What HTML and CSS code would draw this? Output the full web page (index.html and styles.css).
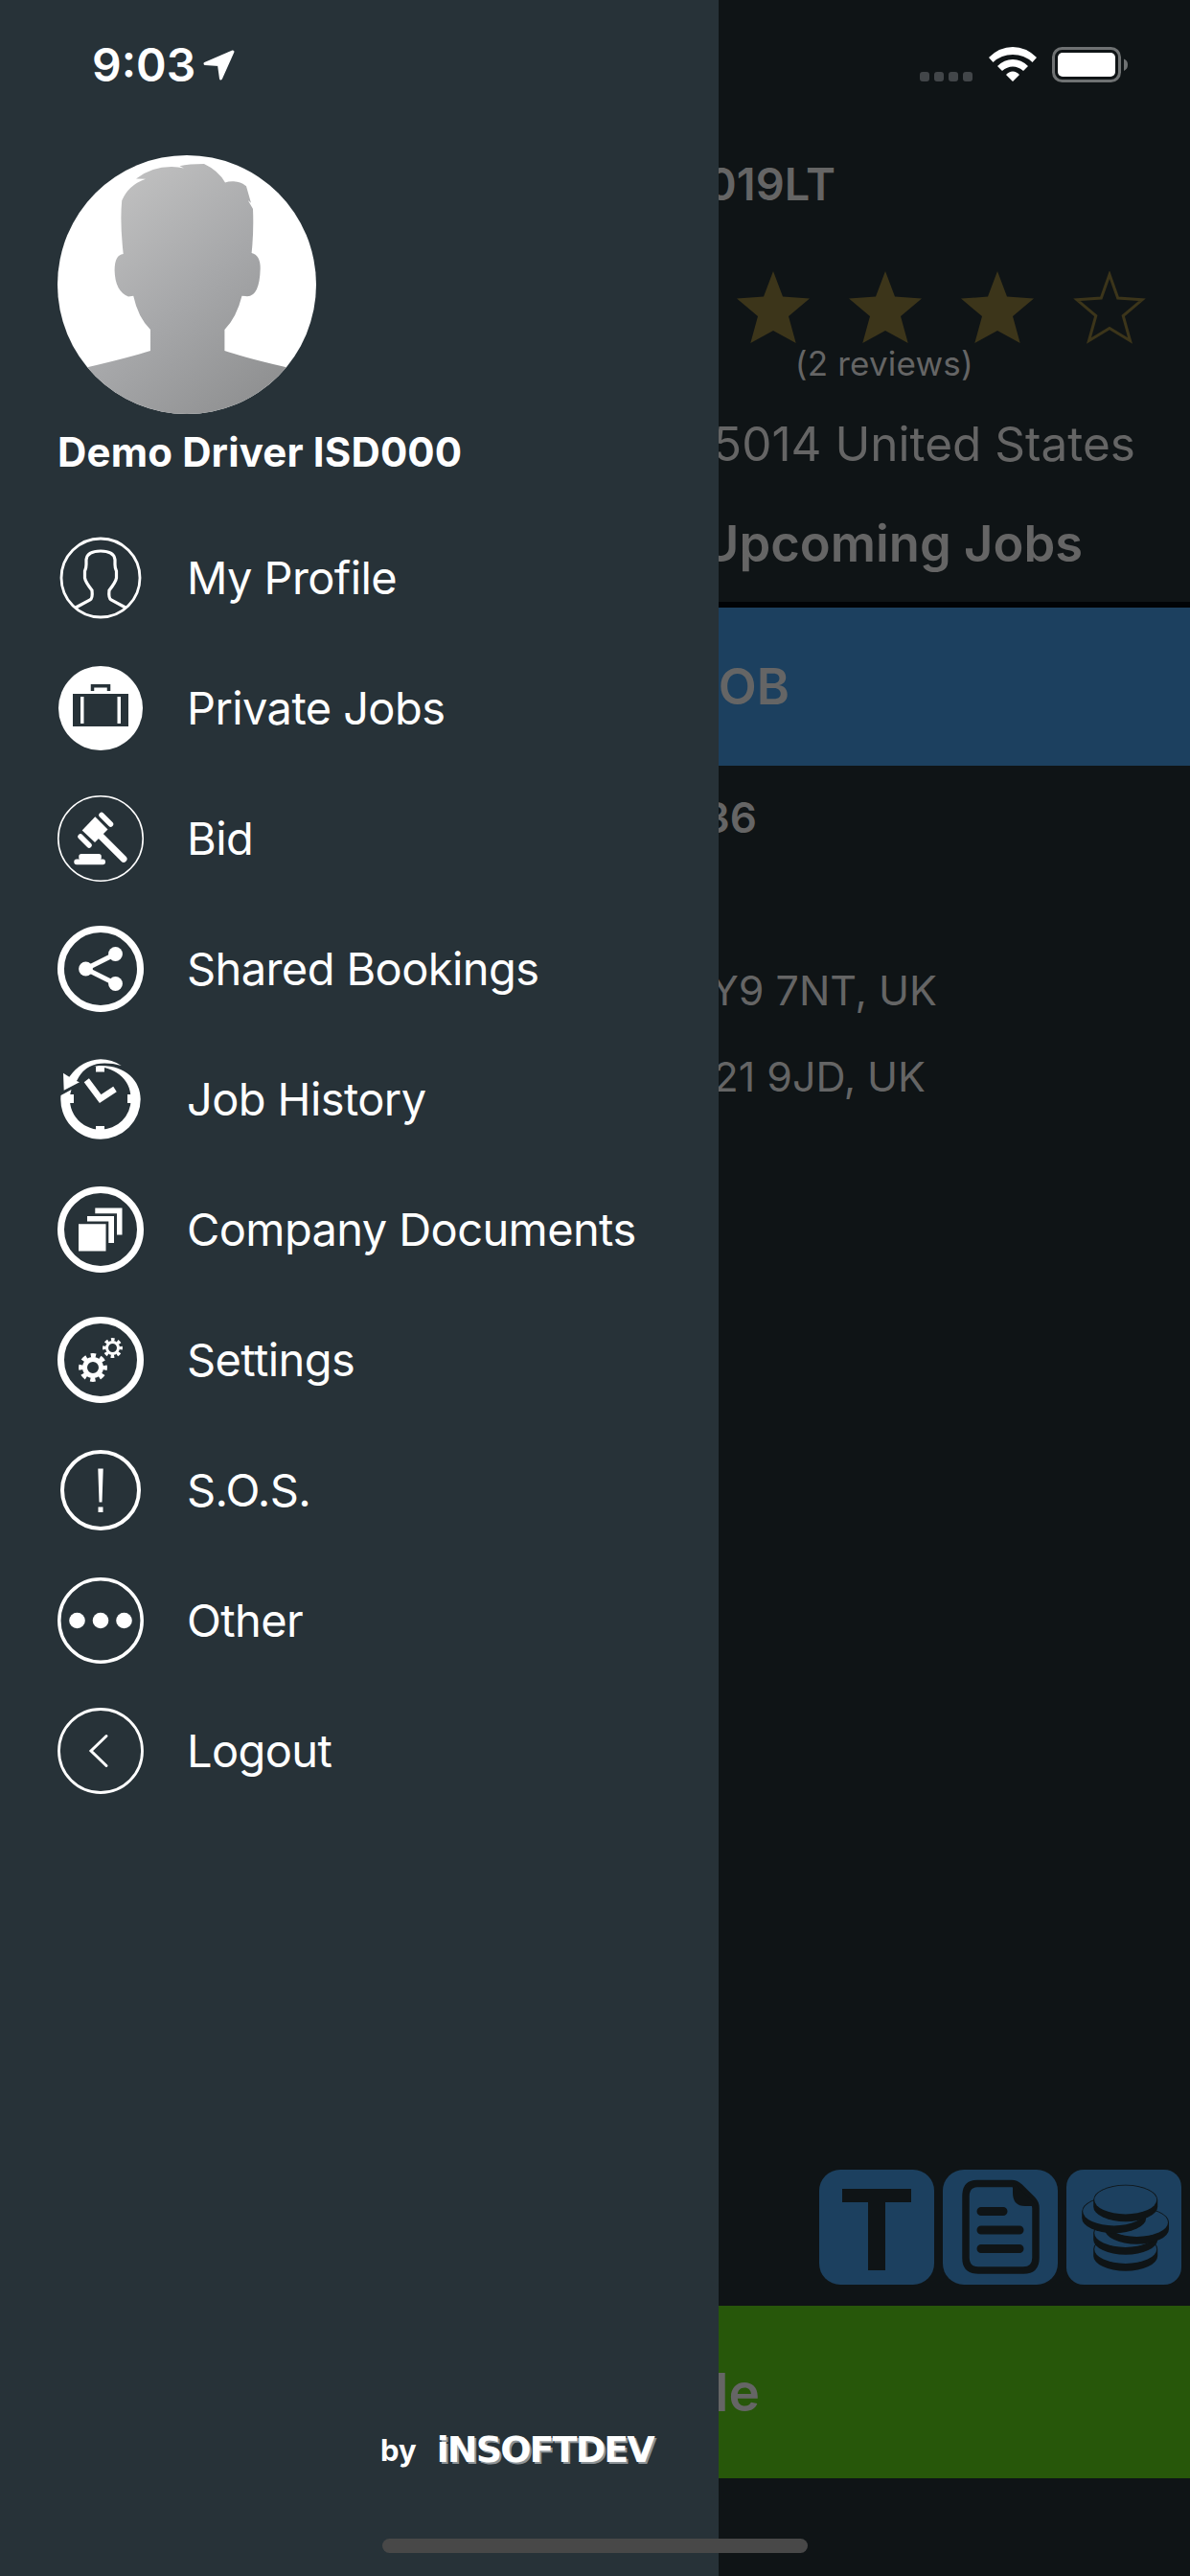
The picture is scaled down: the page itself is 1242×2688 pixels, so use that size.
FILE: index.html
```html
<!DOCTYPE html>
<html lang="en">
<head>
<meta charset="utf-8">
<title>Driver menu</title>
<link rel="stylesheet" href="styles.css">
</head>
<body>
<div class="app">
  <main class="screen">
    <h2 class="row plate">019LT</h2>
    <div class="rating">
      <svg class="star" viewBox="0 0 76 76"><path d="M38 0 48 26.5 76 28.6 54 47 61.7 75 38 62 14.3 75 22 47 0 28.6 28 26.5Z"/></svg>
      <svg class="star" viewBox="0 0 76 76"><path d="M38 0 48 26.5 76 28.6 54 47 61.7 75 38 62 14.3 75 22 47 0 28.6 28 26.5Z"/></svg>
      <svg class="star" viewBox="0 0 76 76"><path d="M38 0 48 26.5 76 28.6 54 47 61.7 75 38 62 14.3 75 22 47 0 28.6 28 26.5Z"/></svg>
      <svg class="star star-empty" viewBox="0 0 76 76"><path d="M38 3.500 46.700 28 72 29.800 52.200 46.500 59.500 72.500 38 59.500 16.500 72.500 23.800 46.500 4 29.800 29.300 28Z"/></svg>
    </div>
    <p class="row reviews">(2 reviews)</p>
    <p class="row address">5014 United States</p>
    <h2 class="row upcoming">Upcoming Jobs</h2>
    <div class="row job-bar">OB</div>
    <p class="row job-id">36</p>
    <p class="row stop stop-from">Y9 7NT, UK</p>
    <p class="row stop stop-to">21 9JD, UK</p>
    <div class="tools">
      <svg class="tool" viewBox="0 0 120 120"><rect class="tile" width="120" height="120" rx="22"/><path class="ink" d="M24 20H96V34H69V105H51V34H24Z"/></svg>
      <svg class="tool" viewBox="0 0 120 120"><rect class="tile" width="120" height="120" rx="22"/><path class="ink-line" d="M36 14.5H72Q76 14.5 80 18L93 31Q97 35 97 40V92Q97 105 84 105H37Q24 105 24 92V28Q24 14.5 36 14.5Z"/><path class="ink" d="M73 14V24Q73 38 86 38H98L76 15Z"/><path class="ink-bar" d="M40 43.500H63M40 63H80M40 82.500H80"/></svg>
      <svg class="tool" viewBox="0 0 120 120">
        <defs><g id="coin"><path class="ink" d="M-33.500 0A33.500 15.700 0 0 1 33.500 0V7A33.500 15.700 0 0 1 -33.500 7Z"/><ellipse class="tile" rx="32.500" ry="14.900"/></g></defs>
        <rect class="tile" width="120" height="120" rx="18"/>
        <use href="#coin" x="61.700" y="83"/>
        <use href="#coin" x="61.700" y="66"/>
        <use href="#coin" x="73.500" y="55"/>
        <use href="#coin" x="49.700" y="43.500"/>
        <use href="#coin" x="61.700" y="31.500"/>
      </svg>
    </div>
    <div class="row status-bar-green">le</div>
  </main>

  <aside class="drawer">
    <svg class="avatar" viewBox="0 0 270 270">
      <defs>
        <linearGradient id="skin" x1="0.1" y1="0" x2="0.8" y2="1"><stop offset="0" stop-color="#c4c4c4"/><stop offset="0.55" stop-color="#a6a7a9"/><stop offset="1" stop-color="#8f9091"/></linearGradient>
        <clipPath id="disc"><circle cx="135" cy="135" r="135"/></clipPath>
      </defs>
      <circle cx="135" cy="135" r="135" fill="#fff"/>
      <path clip-path="url(#disc)" fill="url(#skin)" d="M82 24.500Q98 12 119 12Q126 12 132 13.500L127.500 11.300Q137 9 153 9Q168 16 175 28.500Q179 27 184 27.300Q192 28 197 32.300L202 49.700 198.800 47 204 56Q205 80 202.600 102Q211.700 104 211.700 118Q211 147 198 147.300L192.500 146.700Q187 169 174.400 182V204Q195 211 239 221.300V270H31V221.300Q75 211 97 204V182Q84 169 79.200 146.700L74 147.500Q60 142 59.600 120Q59.600 104 68.700 103Q65 70 67.200 47.300Q74 31 92 24.700Z"/>
    </svg>
    <h1 class="driver-name">Demo Driver ISD000</h1>
    <nav class="menu">
      <a class="item"><svg class="icon" viewBox="0 0 90 90"><g class="line"><circle cx="45" cy="45" r="41" stroke-width="2.800"/><path stroke-width="3.200" d="M19 76 34 68Q37 66 36 58Q29 49 28.500 45V38Q30 35 30 31V26Q31 17 45 17Q59 17 60 26V31Q60 35 61.500 38V45Q61 49 54 58Q53 66 56 68L71 76"/></g></svg><span class="label">My Profile</span></a>
      <a class="item"><svg class="icon" viewBox="0 0 90 90"><circle cx="45" cy="45" r="44" fill="#fff"/><path class="cut" d="M16 30H74V64H16Z"/><path fill="#fff" d="M24 33H27.500V61H24ZM62.500 33H66V61H62.500Z"/><path class="cut-line" d="M36.500 27V21.700H53.500V27"/></svg><span class="label">Private Jobs</span></a>
      <a class="item"><svg class="icon" viewBox="0 0 90 90"><circle class="line" cx="45" cy="45" r="44.200" stroke-width="1.600"/><path fill="#fff" d="M39.300 22.300 52.500 35.500 39 49 25.700 36.500Z"/><path class="line" stroke-width="5.500" stroke-linecap="round" d="M46 20.500 55.500 30M24 43 33 52"/><path class="line" stroke-width="7" stroke-linecap="round" d="M45 42.300 69 66.300"/><rect x="22.300" y="61" width="23.500" height="6.500" rx="2.700" fill="#fff"/><rect x="17.300" y="66.500" width="32.700" height="5.700" rx="2.700" fill="#fff"/></svg><span class="label">Bid</span></a>
      <a class="item"><svg class="icon" viewBox="0 0 90 90"><circle class="line" cx="45" cy="45" r="41.500" stroke-width="7"/><path class="line" stroke-width="5" d="M60.500 29.500 29.500 45 60.500 60.500"/><g fill="#fff"><circle cx="60.500" cy="29.500" r="7.400"/><circle cx="29.500" cy="45" r="7.400"/><circle cx="60.500" cy="60.500" r="7.400"/></g></svg><span class="label">Shared Bookings</span></a>
      <a class="item"><svg class="icon" viewBox="0 0 90 90"><g fill="#fff"><path d="M14.500 35 3.500 41A41.700 41.700 0 0 0 45 86.700A41.700 41.700 0 0 0 86.700 45C86.700 24 68 7 38 10.500C58 11.500 76.700 22 76.700 45A31.700 31.700 0 0 1 45 76.700A31.700 31.700 0 0 1 14.500 35Z"/><path d="M66.700 10Q57 3.500 45 3.300Q25 4 12.300 21.700L6 17.700 6.700 35.700 23 27.300 20 26Q28 9 45 7.700Q56 7 66.700 10Z"/><path d="M40 11H49V16.500H40ZM40 73H49V78H40ZM12 40H17V49H12ZM73 40H78V49H73Z"/></g><path class="line" stroke-width="6.500" d="M30.300 25.300 44.700 44.500 60 34.500"/></svg><span class="label">Job History</span></a>
      <a class="item"><svg class="icon" viewBox="0 0 90 90"><circle class="line" cx="45" cy="45" r="41.500" stroke-width="7"/><path fill="#fff" d="M22 39.300H50.500V67.500H22ZM31 31H59V59H53.300V36.500H31ZM39.300 22.500H67.500V50.500H62V28.300H39.300Z"/></svg><span class="label">Company Documents</span></a>
      <a class="item"><svg class="icon" viewBox="0 0 90 90"><circle class="line" cx="45" cy="45" r="41.500" stroke-width="7"/><circle class="line" cx="37" cy="53" r="8.500" stroke-width="5"/><circle class="line" cx="37" cy="53" r="12.600" stroke-width="4.600" stroke-dasharray="5.300 4.596" stroke-dashoffset="2.650"/><circle class="line" cx="57.500" cy="32.500" r="6" stroke-width="3"/><circle class="line" cx="57.500" cy="32.500" r="8.700" stroke-width="3.400" stroke-dasharray="3.600 3.233" stroke-dashoffset="1.800"/></svg><span class="label">Settings</span></a>
      <a class="item"><svg class="icon" viewBox="0 0 90 90"><circle class="line" cx="45" cy="45" r="40" stroke-width="4"/><path fill="#fff" d="M42.300 22.500H47.700L46.500 57.500H43.500ZM42.500 62.500H47.500V68H42.500Z"/></svg><span class="label">S.O.S.</span></a>
      <a class="item"><svg class="icon" viewBox="0 0 90 90"><circle class="line" cx="45" cy="45" r="43.200" stroke-width="3.500"/><g fill="#fff"><circle cx="20.500" cy="45" r="8.300"/><circle cx="45" cy="45" r="8.300"/><circle cx="69.500" cy="45" r="8.300"/></g></svg><span class="label">Other</span></a>
      <a class="item"><svg class="icon" viewBox="0 0 90 90"><circle class="line" cx="45" cy="45" r="43.500" stroke-width="2.800"/><path class="line" stroke-width="3" stroke-linecap="round" d="M51 29.500 35 45 51 60.500"/></svg><span class="label">Logout</span></a>
    </nav>
    <footer class="credit"><span class="by">by</span><span class="brand">iNSOFTDEV</span></footer>
  </aside>

  <header class="status">
    <span class="clock">9:03</span>
    <svg class="locate" viewBox="0 0 33 32"><path fill="#fff" stroke="#fff" stroke-width="3" stroke-linejoin="round" d="M31 2 2 14.500 16.500 15.500 18.500 30Z"/></svg>
    <svg class="cell" viewBox="0 0 55 10"><g fill="#424649"><rect width="10" height="10" rx="3"/><rect x="15" width="10" height="10" rx="3"/><rect x="30" width="10" height="10" rx="3"/><rect x="45" width="10" height="10" rx="3"/></g></svg>
    <svg class="wifi" viewBox="0 0 50 36"><path fill="#fff" d="M0 11Q11 0 25 0T50 11L45.500 16Q37 8 25 8T4.500 16ZM9 20Q16 13 25 13T41 20L36 25Q31 20.500 25 20.500T14 25ZM18 29Q21 25.500 25 25.500T32 29L25 36Z"/></svg>
    <svg class="battery" viewBox="0 0 80 38"><rect x="1.500" y="1.500" width="69" height="34" rx="9" fill="none" stroke="#6f7273" stroke-width="3"/><rect x="6" y="6" width="60" height="25" rx="5" fill="#fff"/><path fill="#6f7273" d="M75 12.500Q79 14 79 18.500T75 25Z"/></svg>
  </header>
  <div class="home-bar"></div>
</div>
</body>
</html>
```
FILE: styles.css
```css
* { box-sizing: border-box; margin: 0; padding: 0; }
body { background: #0f1416; font-family: Inter, "Liberation Sans", sans-serif; color: #fff; }
.app { position: relative; width: 1242px; height: 2688px; overflow: hidden; }

.screen { display: flex; flex-direction: column; height: 100%; color: #656565; background: #0f1416; }
.row { display: flex; align-items: center; justify-content: flex-end; white-space: nowrap; font-weight: 400; flex: none; }
.plate { height: 60px; margin-top: 161px; padding-right: 370px; font-size: 47px; font-weight: 600; }
.rating { display: flex; justify-content: flex-end; gap: 41px; margin-top: 62px; padding-right: 46px; height: 76px; }
.star { width: 76px; height: 76px; fill: #3c351a; }
.star-empty { fill: none; stroke: #3c351a; stroke-width: 3; }
.reviews { height: 40px; padding-right: 226px; font-size: 35px; letter-spacing: 0.2px; }
.address { height: 60px; margin-top: 34px; padding-right: 57px; font-size: 49.5px; }
.upcoming { height: 70px; margin-top: 39px; padding-right: 112px; font-size: 52.5px; font-weight: 600; }
.job-bar { height: 171px; margin-top: 26px; padding: 0 418px 0 0; border-top: 6px solid #000306; background: #1c405f; font-size: 52px; font-weight: 600; }
.job-id { height: 60px; margin-top: 24px; padding-right: 452px; font-size: 44px; font-weight: 600; }
.stop { height: 60px; font-size: 43px; }
.stop-from { margin-top: 120px; padding-right: 264px; }
.stop-to { margin-top: 30px; padding-right: 276px; }
.tools { display: flex; justify-content: flex-end; gap: 9px; margin-top: auto; padding: 0 9px 22px 0; }
.tool { width: 120px; height: 120px; }
.tile { fill: #1c405f; }
.ink { fill: #0f1416; }
.ink-line { fill: none; stroke: #0f1416; stroke-width: 7.5; }
.ink-bar { fill: none; stroke: #0f1416; stroke-width: 9; stroke-linecap: round; }
.status-bar-green { height: 180px; margin-bottom: 102px; padding-right: 449px; background: #27570a; font-size: 55px; font-weight: 600; }

.drawer { position: absolute; top: 0; left: 0; display: flex; flex-direction: column; width: 750px; height: 100%; padding-top: 162px; background: #273238; }
.avatar { display: block; width: 270px; height: 270px; margin-left: 60px; }
.driver-name { height: 80px; margin-left: 60px; font-size: 42px; line-height: 80px; font-weight: 700; letter-spacing: 0.15px; white-space: nowrap; }
.menu { display: flex; flex-direction: column; margin-top: 23px; }
.item { display: flex; align-items: center; gap: 45px; height: 136px; padding-left: 60px; font-size: 47px; letter-spacing: -0.6px; white-space: nowrap; }
.label { padding-bottom: 2px; }
.icon { width: 90px; height: 90px; flex: none; }
.line { fill: none; stroke: #fff; }
.cut { fill: #273238; }
.cut-line { fill: none; stroke: #273238; stroke-width: 3.5; }
.credit { display: flex; align-items: center; gap: 21px; height: 50px; margin-top: auto; margin-bottom: 107px; padding-left: 397px; }
.by { font-size: 31px; font-weight: 700; }
.brand { font-family: "DejaVu Sans", sans-serif; font-size: 38px; font-weight: 700; letter-spacing: -1.9px; text-shadow: 2px 2px 0 #8c9397; }

.status { position: absolute; top: 0; left: 0; display: flex; align-items: flex-start; width: 100%; height: 130px; }
.clock { margin: 39px 0 0 96px; width: 116px; font-size: 48px; line-height: 58px; font-weight: 600; }
.locate { width: 33px; height: 32px; margin-top: 52px; }
.cell { width: 55px; height: 10px; margin: 75px 0 0 auto; }
.wifi { width: 50px; height: 36px; margin: 49px 0 0 17px; }
.battery { width: 80px; height: 38px; margin: 49px 64px 0 16px; }
.home-bar { position: absolute; left: 399px; top: 2649px; width: 444px; height: 15px; border-radius: 8px; background: #484848; }
```
